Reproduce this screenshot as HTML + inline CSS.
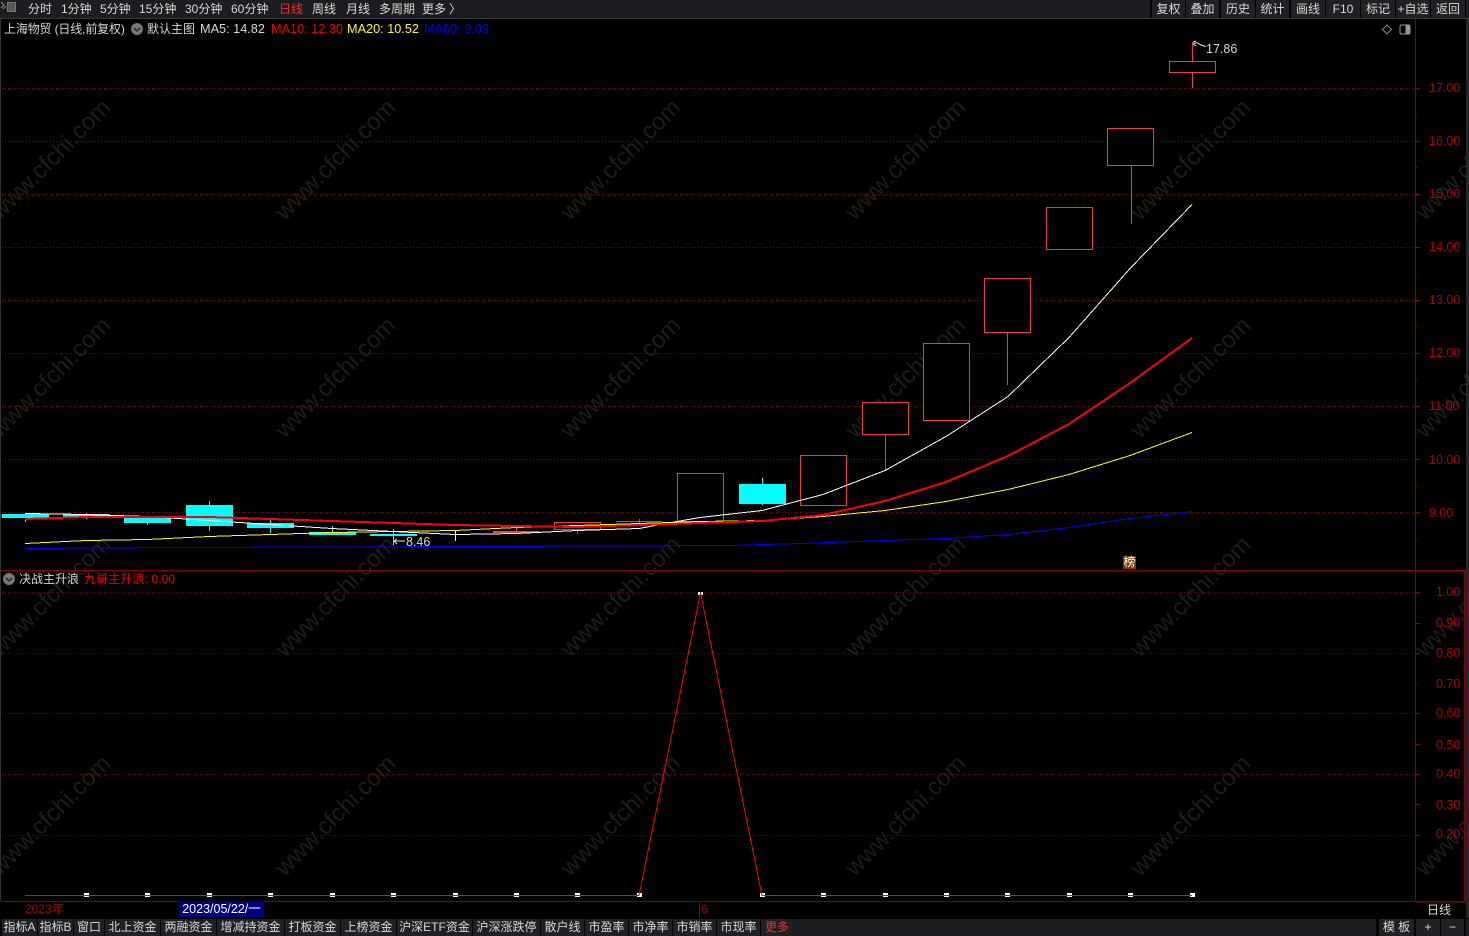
<!DOCTYPE html>
<html><head><meta charset="utf-8"><style>
html,body{margin:0;padding:0;background:#000;width:1469px;height:936px;overflow:hidden}
body{position:relative;font-family:"Liberation Sans","Noto Sans CJK SC",sans-serif;font-size:12px;color:#d8d8d8}
svg{position:absolute;left:0;top:0}
.t{position:absolute;white-space:nowrap;line-height:16px;height:16px}
.m{font-size:12.7px}
.v{font-size:12.5px}
.b{position:absolute;top:919px;height:17px;background:#202124;line-height:16px;text-align:center;white-space:nowrap;color:#d8d8d8}
.r{position:absolute;top:0;height:18px;background:#202124;line-height:18px;text-align:center;white-space:nowrap;color:#d8d8d8}
.w{position:absolute;font-size:24px;line-height:28px;color:#1d1d1d;white-space:nowrap;transform:rotate(-45deg);transform-origin:center;width:180px;text-align:center}
.y{position:absolute;left:1429px;color:#b00000;line-height:14px;white-space:nowrap;font-size:12.5px}
</style></head><body>
<div id="wm">
<div class="w" style="left:-39px;top:146px">www.cfchi.com</div><div class="w" style="left:246px;top:146px">www.cfchi.com</div><div class="w" style="left:531px;top:146px">www.cfchi.com</div><div class="w" style="left:816px;top:146px">www.cfchi.com</div><div class="w" style="left:1101px;top:146px">www.cfchi.com</div>
<div class="w" style="left:-39px;top:364px">www.cfchi.com</div><div class="w" style="left:246px;top:364px">www.cfchi.com</div><div class="w" style="left:531px;top:364px">www.cfchi.com</div><div class="w" style="left:816px;top:364px">www.cfchi.com</div><div class="w" style="left:1101px;top:364px">www.cfchi.com</div>
<div class="w" style="left:-39px;top:583px">www.cfchi.com</div><div class="w" style="left:246px;top:583px">www.cfchi.com</div><div class="w" style="left:531px;top:583px">www.cfchi.com</div><div class="w" style="left:816px;top:583px">www.cfchi.com</div><div class="w" style="left:1101px;top:583px">www.cfchi.com</div>
<div class="w" style="left:-39px;top:802px">www.cfchi.com</div><div class="w" style="left:246px;top:802px">www.cfchi.com</div><div class="w" style="left:531px;top:802px">www.cfchi.com</div><div class="w" style="left:816px;top:802px">www.cfchi.com</div><div class="w" style="left:1101px;top:802px">www.cfchi.com</div>
<div class="w" style="left:1386px;top:146px">www.cfchi.com</div><div class="w" style="left:1386px;top:364px">www.cfchi.com</div><div class="w" style="left:1386px;top:583px">www.cfchi.com</div><div class="w" style="left:1386px;top:802px">www.cfchi.com</div>
</div>
<svg width="1469" height="936" viewBox="0 0 1469 936" shape-rendering="crispEdges">
<!-- grid -->
<g stroke="#8f0000" stroke-width="1" stroke-dasharray="1 2" fill="none">
<path d="M2 88.5H1415M2 141.5H1415M2 194.5H1415M2 247.5H1415M2 300.5H1415M2 353.5H1415M2 406.5H1415M2 459.5H1415M2 512.5H1415"/>
<path d="M2 592.5H1415M2 653.5H1415M2 713.5H1415M2 774.5H1415M2 835.5H1415" stroke="#7a0000"/>
</g>
<!-- panel frame -->
<g stroke="#8b0000" fill="none">
<path d="M0.5 19V901" stroke="#333"/>
<path d="M1415.5 19V901"/>
<path d="M1 570.5H1415"/>
<path d="M1 901.5H1415"/>
<path d="M1415.5 570.5H1464.5V901.5H1415.5" stroke-width="1.5"/>
<path d="M1415 88.5h5M1415 141.5h5M1415 194.5h5M1415 247.5h5M1415 300.5h5M1415 353.5h5M1415 406.5h5M1415 459.5h5M1415 512.5h5"/>
<path d="M1415 114.5h2M1415 167.5h2M1415 220.5h2M1415 273.5h2M1415 326.5h2M1415 380.5h2M1415 433.5h2M1415 486.5h2M1415 539.5h2"/>
<path d="M1415 592.5h5M1415 623.5h5M1415 653.5h5M1415 683.5h2M1415 713.5h5M1415 744.5h5M1415 774.5h5M1415 804.5h5M1415 835.5h5"/>
</g>
<rect x="1466" y="19" width="3" height="899" fill="#262628"/>
<!-- cyan candles -->
<g fill="#00ffff" stroke="none">
<rect x="2" y="514" width="47" height="4"/><rect x="25" y="514" width="1" height="8"/>
<rect x="63" y="514" width="47" height="3"/><rect x="86" y="513" width="1" height="6"/>
<rect x="124" y="518" width="47" height="5"/><rect x="147" y="518" width="1" height="7"/>
<rect x="186" y="505" width="47" height="21"/><rect x="209" y="501" width="1" height="30"/>
<rect x="247" y="523" width="47" height="5"/><rect x="270" y="520" width="1" height="13"/>
<rect x="309" y="532" width="47" height="3"/><rect x="332" y="526" width="1" height="8"/>
<rect x="370" y="534" width="47" height="2"/><rect x="393" y="529" width="1" height="16"/>
<rect x="739" y="484" width="47" height="20"/><rect x="762" y="478" width="1" height="27"/>
</g>
<!-- red candles -->
<g fill="#000" stroke="#f03c3c" stroke-width="1">
<path d="M1192.5 42V62M1192.5 73V88" fill="none"/><rect x="1169.5" y="61.5" width="46" height="11"/>
<path d="M1131.5 165V224" fill="none"/><rect x="1107.5" y="128.5" width="46" height="37"/>
<rect x="1046.5" y="207.5" width="46" height="42"/>
<path d="M1007.5 332V385" fill="none"/><rect x="984.5" y="278.5" width="46" height="54"/>
<rect x="923.5" y="343.5" width="46" height="77"/>
<path d="M885.5 434V470" fill="none"/><rect x="862.5" y="402.5" width="46" height="32"/>
<rect x="800.5" y="455.5" width="46" height="50"/>
<rect x="677.5" y="473.5" width="46" height="48"/>
<path d="M616 521.5H662M639.5 519V525" fill="none"/>
<path d="M577.5 529V534" fill="none"/><rect x="554.5" y="522.5" width="46" height="7"/>
<path d="M516.5 527V531" fill="none"/>
</g>
<rect x="493" y="531" width="47" height="2" fill="#f04040"/>
<path d="M455.5 530V541" stroke="#fff" fill="none"/>
<!-- squares -->
<g fill="#fff">
<rect x="84" y="893" width="5" height="4"/><rect x="145" y="893" width="5" height="4"/><rect x="207" y="893" width="5" height="4"/><rect x="268" y="893" width="5" height="4"/><rect x="330" y="893" width="5" height="4"/><rect x="391" y="893" width="5" height="4"/><rect x="453" y="893" width="5" height="4"/><rect x="514" y="893" width="5" height="4"/><rect x="575" y="893" width="5" height="4"/><rect x="637" y="893" width="5" height="4"/><rect x="760" y="893" width="5" height="4"/><rect x="821" y="893" width="5" height="4"/><rect x="883" y="893" width="5" height="4"/><rect x="944" y="893" width="5" height="4"/><rect x="1005" y="893" width="5" height="4"/><rect x="1067" y="893" width="5" height="4"/><rect x="1128" y="893" width="5" height="4"/><rect x="1190" y="893" width="5" height="4"/>
<rect x="698" y="592" width="2" height="3"/><rect x="701" y="592" width="2" height="3"/>
</g>
<!-- MAs -->
<g fill="none" stroke-linejoin="round">
<polyline stroke="#0000ff" stroke-width="1" points="25,548.5 178,547.5 486,546.5 730,545.5 800,543.5 885,540.5 946,538.5 1008,534.5 1069,527.5 1130,518.5 1192,511.5"/>
<polyline stroke="#ffff00" stroke-width="1" points="25,543.5 86,540.5 147,539.5 209,536.5 270,534.5 332,532.5 393,531.5 455,530.5 516,527.5 577,525.5 639,523.5 700,521.5 762,520.5 823,516.5 885,510.5 946,501.5 1008,489.5 1069,474.5 1130,455.5 1192,432.5"/>
<polyline stroke="#ffffff" stroke-width="1" points="25,513.5 86,514.5 147,516.5 209,520.5 270,524.5 332,528.5 393,531.5 455,534.5 516,533.5 577,530.5 639,528.5 677,521.5 700,517.5 762,510.5 823,494.5 885,470.5 946,436.5 1008,396.5 1069,337.5 1130,268.5 1192,204.5"/>
<polyline stroke="#ff0000" stroke-width="2" points="25,519 86,517 147,517 209,517 270,519 332,521 393,523 455,525 516,526 577,527 639,525 700,523 762,521 823,515 885,501 946,482 1008,456 1069,424 1130,383 1192,338"/>
<!-- sub line -->
<polyline stroke="#ff0000" stroke-width="1" points="25,895.5 639,895.5 700.5,593 762,895.5 1192,895.5"/>
</g>
<g fill="none" shape-rendering="auto">
<path d="M1193 44l4-1.5 4 2.5 5 1.5M1193 42l3 -1M1193 44l3 2" stroke="#e8e8e8"/>
<path d="M405 541h-11m0 0l3-2m-3 2l3 3" stroke="#e8e8e8"/>
<path d="M1387 25l4.5 4.5-4.5 4.5-4.5-4.5z" stroke="#888"/>
<rect x="1400" y="25" width="10" height="9" rx="1.5" stroke="#999"/>
<rect x="1405.5" y="25" width="4.5" height="9" fill="#999"/>
</g>
<path d="M699.5 902V918" stroke="#8b0000"/>
<!-- top bar bg -->
<rect x="0" y="0" width="1469" height="18" fill="#1c1d20"/>
<rect x="0" y="18" width="1469" height="1" fill="#3a3a3c"/>
<rect x="1150" y="0" width="316" height="18" fill="#050505"/>
<rect x="0" y="918" width="1469" height="18" fill="#1c1d20"/>
<rect x="0" y="918" width="1469" height="1" fill="#000"/>
<rect x="0" y="919" width="793" height="17" fill="#050505"/>
<rect x="1376" y="919" width="90" height="17" fill="#050505"/>
<!-- logo -->
<g shape-rendering="auto" fill="none">
<path d="M1 2l3 3-3 3M3 9l3-3" stroke="#888"/>
<rect x="7.5" y="2.5" width="8" height="9" fill="#555" stroke="#777"/>
<circle cx="137" cy="29" r="6" fill="#777"/>
<path d="M134 28l3 3 3-3" stroke="#222" stroke-width="1.3"/>
<circle cx="9" cy="579" r="6" fill="#777"/>
<path d="M6 578l3 3 3-3" stroke="#222" stroke-width="1.3"/>
</g>
</svg>

<!-- top left menu -->
<span class="t" style="left:28px;top:1px">分时</span>
<span class="t" style="left:61px;top:1px">1分钟</span>
<span class="t" style="left:100px;top:1px">5分钟</span>
<span class="t" style="left:139px;top:1px">15分钟</span>
<span class="t" style="left:185px;top:1px">30分钟</span>
<span class="t" style="left:231px;top:1px">60分钟</span>
<span class="t" style="left:279px;top:1px;color:#e83030">日线</span>
<span class="t" style="left:312px;top:1px">周线</span>
<span class="t" style="left:346px;top:1px">月线</span>
<span class="t" style="left:379px;top:1px">多周期</span>
<span class="t" style="left:422px;top:1px">更多</span>
<span class="t" style="left:449px;top:1px">〉</span>

<!-- top right menu -->
<span class="r" style="left:1152px;width:33px">复权</span>
<span class="r" style="left:1186px;width:33px">叠加</span>
<span class="r" style="left:1221px;width:34px">历史</span>
<span class="r" style="left:1256px;width:33px">统计</span>
<span class="r" style="left:1291px;width:34px">画线</span>
<span class="r" style="left:1326px;width:34px">F10</span>
<span class="r" style="left:1361px;width:34px">标记</span>
<span class="r" style="left:1396px;width:34px">+自选</span>
<span class="r" style="left:1431px;width:34px">返回</span>

<!-- legend -->
<span class="t" style="left:4px;top:21px;letter-spacing:-.15px">上海物贸 (日线,前复权)</span>
<span class="t" style="left:147px;top:21px">默认主图</span>
<span class="t m" style="left:200px;top:21px">MA5: 14.82</span>
<span class="t m" style="left:271px;top:21px;color:#f00000">MA10: 12.30</span>
<span class="t m" style="left:347px;top:21px;color:#ffff00">MA20: 10.52</span>
<span class="t m" style="left:424px;top:21px;color:#0000ee">MA60: 9.03</span>
<span class="t v" style="left:1206px;top:41px">17.86</span>
<span class="t v" style="left:406px;top:534px">8.46</span>
<span class="t" style="left:19px;top:571px">决战主升浪</span>
<span class="t" style="left:84px;top:571px;color:#f00000;letter-spacing:.1px">九哥主升浪: 0.00</span>
<span class="t" style="left:1123px;top:556px;width:13px;height:13px;line-height:13px;text-align:center;background:#7a3c00;color:#fff">榜</span>

<!-- y axis -->
<span class="y" style="top:81px">17.00</span><span class="y" style="top:134px">16.00</span><span class="y" style="top:187px">15.00</span><span class="y" style="top:240px">14.00</span><span class="y" style="top:293px">13.00</span><span class="y" style="top:346px">12.00</span><span class="y" style="top:399px">11.00</span><span class="y" style="top:453px">10.00</span><span class="y" style="top:506px">9.00</span>
<span class="y" style="top:585px;left:1436px">1.00</span><span class="y" style="top:616px;left:1436px">0.90</span><span class="y" style="top:646px;left:1436px">0.80</span><span class="y" style="top:677px;left:1436px">0.70</span><span class="y" style="top:706px;left:1436px">0.60</span><span class="y" style="top:738px;left:1436px">0.50</span><span class="y" style="top:767px;left:1436px">0.40</span><span class="y" style="top:798px;left:1436px">0.30</span><span class="y" style="top:827px;left:1436px">0.20</span>

<!-- date row -->
<span class="t" style="left:25px;top:901px;color:#a30000">2023年</span>
<span class="t v" style="left:179px;top:901px;width:85px;background:#000080;color:#fff;text-align:center">2023/05/22/一</span>
<span class="t" style="left:701px;top:901px;color:#a30000">6</span>
<span class="t" style="left:1427px;top:902px">日线</span>

<!-- bottom bar -->
<span class="b" style="left:2px;width:35px">指标A</span>
<span class="b" style="left:38px;width:35px">指标B</span>
<span class="b" style="left:74px;width:30px">窗口</span>
<span class="b" style="left:105px;width:55px">北上资金</span>
<span class="b" style="left:161px;width:55px">两融资金</span>
<span class="b" style="left:217px;width:67px">增减持资金</span>
<span class="b" style="left:285px;width:55px">打板资金</span>
<span class="b" style="left:341px;width:55px">上榜资金</span>
<span class="b" style="left:397px;width:75px">沪深ETF资金</span>
<span class="b" style="left:473px;width:67px">沪深涨跌停</span>
<span class="b" style="left:541px;width:43px">散户线</span>
<span class="b" style="left:585px;width:43px">市盈率</span>
<span class="b" style="left:629px;width:43px">市净率</span>
<span class="b" style="left:673px;width:43px">市销率</span>
<span class="b" style="left:717px;width:43px">市现率</span>
<span class="b" style="left:761px;width:32px;color:#e83030">更多</span>
<span class="b" style="left:1379px;width:35px">模 板</span>
<span class="b" style="left:1416px;width:24px">+</span>
<span class="b" style="left:1441px;width:23px">−</span>
</body></html>
